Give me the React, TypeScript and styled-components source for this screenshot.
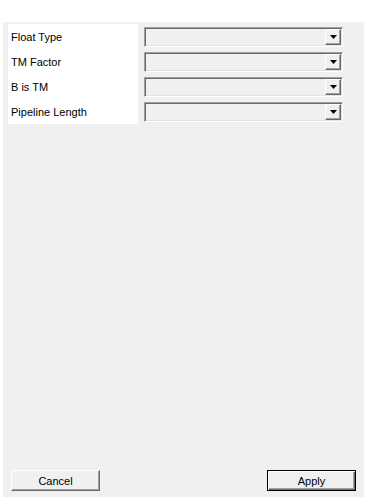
import React from "react";
import styled, { createGlobalStyle } from "styled-components";

const GlobalStyle = createGlobalStyle`
  html, body {
    margin: 0;
    padding: 0;
    background: #ffffff;
  }
  body {
    font-family: "Liberation Sans", Arial, sans-serif;
    font-size: 11px;
    color: #000;
  }
`;

const fields = ["Float Type", "TM Factor", "B is TM", "Pipeline Length"];

function App() {
  return (
    <>
      <GlobalStyle />
      <StyledPanel>
        <StyledForm>
          <StyledLabels>
            {fields.map((f) => (
              <StyledLabel key={f}>{f}</StyledLabel>
            ))}
          </StyledLabels>
          <StyledCombos>
            {fields.map((f) => (
              <StyledRow key={f}>
                <StyledCombo>
                  <StyledDropButton>
                    <svg width="7" height="4" viewBox="0 0 7 4">
                      <path d="M0 0H7L3.5 4Z" fill="#000" />
                    </svg>
                  </StyledDropButton>
                </StyledCombo>
              </StyledRow>
            ))}
          </StyledCombos>
        </StyledForm>
        <StyledFooter>
          <StyledButton>Cancel</StyledButton>
          <StyledButton $default>Apply</StyledButton>
        </StyledFooter>
      </StyledPanel>
    </>
  );
}

export default App;

const StyledPanel = styled.div`
  display: flex;
  flex-direction: column;
  justify-content: space-between;
  box-sizing: border-box;
  margin: 22px 0 0 3px;
  width: 361px;
  height: 475px;
  background: #f0f0f0;
  padding: 2px 8px 6px 5px;
`;

const StyledForm = styled.div`
  display: flex;
  gap: 6px;
`;

const StyledLabels = styled.div`
  display: flex;
  flex-direction: column;
  width: 130px;
  background: #ffffff;
`;

const StyledLabel = styled.div`
  display: flex;
  align-items: center;
  height: 25px;
  padding-left: 3px;
  color: #000;
`;

const StyledCombos = styled.div`
  display: flex;
  flex-direction: column;
`;

const StyledRow = styled.div`
  height: 25px;
  padding-top: 3px;
  box-sizing: border-box;
`;

const StyledCombo = styled.div`
  box-sizing: border-box;
  display: flex;
  justify-content: flex-end;
  width: 199px;
  height: 20px;
  padding: 1px;
  background: #f0f0f0;
  border-style: solid;
  border-width: 1px;
  border-color: #a0a0a0 #ffffff #ffffff #a0a0a0;
  box-shadow: inset 1px 1px 0 #696969, inset -1px -1px 0 #e3e3e3;
`;

const StyledDropButton = styled.div`
  box-sizing: border-box;
  display: flex;
  align-items: center;
  justify-content: center;
  width: 16px;
  height: 100%;
  background: #f0f0f0;
  border-style: solid;
  border-width: 1px;
  border-color: #ffffff #696969 #696969 #ffffff;
  box-shadow: inset -1px -1px 0 #a0a0a0;
`;

const StyledFooter = styled.div`
  display: flex;
  justify-content: space-between;
  padding-left: 3px;
`;

const StyledButton = styled.button<{ $default?: boolean }>`
  box-sizing: border-box;
  width: 89px;
  height: 21px;
  padding: 0;
  font-family: "Liberation Sans", Arial, sans-serif;
  font-size: 11px;
  color: #000;
  background: #f0f0f0;
  border-style: solid;
  border-width: 1px;
  border-color: ${(p) =>
    p.$default ? "#000" : "#ffffff #696969 #696969 #ffffff"};
  box-shadow: ${(p) =>
    p.$default
      ? "inset 1px 1px 0 #ffffff, inset -1px -1px 0 #696969, inset -2px -2px 0 #a0a0a0"
      : "inset -1px -1px 0 #a0a0a0"};
`;
